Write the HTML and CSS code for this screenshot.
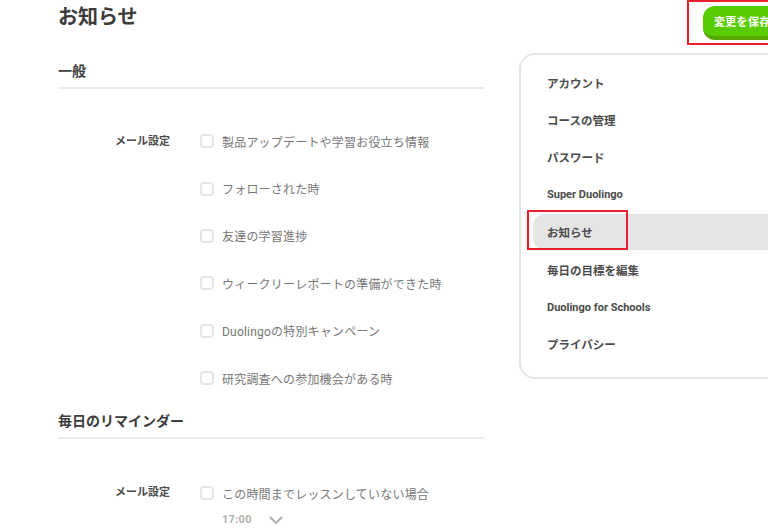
FILE: index.html
```html
<!DOCTYPE html>
<html lang="ja">
<head>
<meta charset="utf-8">
<title>お知らせ</title>
<link rel="stylesheet" href="styles.css">
</head>
<body>
<div class="page">
  <main class="main">
    <h1 class="title">お知らせ</h1>

    <section class="section">
      <h2 class="section-title">一般</h2>
      <div class="group">
        <div class="label">メール設定</div>
        <ul class="options">
          <li class="option"><span class="box"></span><span class="opt-text">製品アップデートや学習お役立ち情報</span></li>
          <li class="option"><span class="box"></span><span class="opt-text">フォローされた時</span></li>
          <li class="option"><span class="box"></span><span class="opt-text">友達の学習進捗</span></li>
          <li class="option"><span class="box"></span><span class="opt-text">ウィークリーレポートの準備ができた時</span></li>
          <li class="option"><span class="box"></span><span class="opt-text">Duolingoの特別キャンペーン</span></li>
          <li class="option"><span class="box"></span><span class="opt-text">研究調査への参加機会がある時</span></li>
        </ul>
      </div>
    </section>

    <section class="section section-second">
      <h2 class="section-title">毎日のリマインダー</h2>
      <div class="group group-second">
        <div class="label">メール設定</div>
        <ul class="options">
          <li class="option"><span class="box"></span><span class="opt-text">この時間までレッスンしていない場合</span></li>
        </ul>
      </div>
      <div class="time">
        <span class="time-value">17:00</span>
        <svg class="chev" width="14" height="9" viewBox="0 0 14 9"><path d="M1.5 1.5 L7 7 L12.5 1.5" fill="none" stroke="#afafaf" stroke-width="2" stroke-linecap="round" stroke-linejoin="round"/></svg>
      </div>
    </section>
  </main>

  <aside class="side">
    <div class="save-wrap">
      <button class="save">変更を保存</button>
      <span class="mark mark-save"></span>
    </div>
    <nav class="card">
      <a class="nav-item">アカウント</a>
      <a class="nav-item">コースの管理</a>
      <a class="nav-item">パスワード</a>
      <a class="nav-item latin">Super Duolingo</a>
      <a class="nav-item active">お知らせ<span class="mark mark-nav"></span></a>
      <a class="nav-item">毎日の目標を編集</a>
      <a class="nav-item latin">Duolingo for Schools</a>
      <a class="nav-item">プライバシー</a>
    </nav>
  </aside>
</div>
</body>
</html>
```

FILE: styles.css
```css
html, body {
  margin: 0;
  padding: 0;
  overflow: hidden;
  background: #ffffff;
}

body {
  font-family: Roboto, "Noto Sans CJK JP", sans-serif;
  color: #4b4b4b;
}

.page {
  display: flex;
  align-items: flex-start;
  padding-left: 58px;
  width: 760px;
}

.main {
  width: 426px;
  flex: none;
}

.title {
  margin: 0;
  font-size: 20px;
  line-height: 34px;
  font-weight: 700;
  color: #3c3c3c;
}

.section {
  margin-top: 27px;
}

.section-second {
  margin-top: 9px;
}

.section-title {
  margin: 0;
  font-size: 14px;
  line-height: 20px;
  font-weight: 700;
  color: #3c3c3c;
  padding-bottom: 6px;
  border-bottom: 2px solid #ebebeb;
}

.group {
  display: flex;
  padding-top: 28.5px;
}

.group-second {
  padding-top: 30.5px;
}

.label {
  width: 112px;
  flex: none;
  text-align: right;
  font-size: 11px;
  font-weight: 700;
  line-height: 47.4px;
  color: #4b4b4b;
}

.options {
  list-style: none;
  margin: 0 0 0 30px;
  padding: 0;
}

.option {
  display: flex;
  align-items: center;
  height: 47.4px;
}

.box {
  width: 10px;
  height: 10px;
  border: 2px solid #e5e5e5;
  border-radius: 4px;
  background: #fff;
  flex: none;
}

.opt-text {
  margin-left: 8px;
  font-size: 12px;
  letter-spacing: 0.2px;
  color: #777777;
}

.time {
  display: flex;
  align-items: center;
  margin-left: 164px;
  margin-top: -7px;
  height: 20px;
}

.time-value {
  font-size: 11px;
  font-weight: 700;
  color: #afafaf;
  letter-spacing: 0.3px;
}

.chev {
  margin-left: 17px;
  margin-top: 2px;
}

.side {
  margin-left: 35px;
  width: 300px;
  flex: none;
  display: flex;
  flex-direction: column;
}

.save-wrap {
  position: relative;
  margin-top: 6px;
  margin-left: 184px;
  height: 34px;
}

.save {
  display: block;
  width: 110px;
  height: 34px;
  padding: 0 0 0 11px;
  border: none;
  border-bottom: 4px solid #58a700;
  border-radius: 12px;
  background: #58cc02;
  color: #ffffff;
  font-family: Roboto, "Noto Sans CJK JP", sans-serif;
  font-size: 11px;
  font-weight: 700;
  text-align: left;
  letter-spacing: 0.3px;
}

.mark {
  position: absolute;
  border: 2px solid #e8202b;
  pointer-events: none;
}

.mark-save {
  top: -6px;
  left: -16px;
  width: 140px;
  height: 41px;
}

.card {
  margin-top: 13px;
  border: 2px solid #e5e5e5;
  border-radius: 16px;
  padding: 9px 0 14px 12px;
  display: flex;
  flex-direction: column;
}

.nav-item {
  position: relative;
  display: flex;
  align-items: center;
  height: 37.4px;
  padding-left: 14px;
  font-size: 11.5px;
  font-weight: 700;
  color: #4b4b4b;
  border-radius: 12px;
}

.nav-item.latin {
  font-size: 11px;
}

.nav-item.active {
  background: #e5e5e5;
  height: 36px;
  margin: 0.7px 0;
}

.mark-nav {
  top: -4px;
  left: -6px;
  width: 97px;
  height: 36px;
}
```
